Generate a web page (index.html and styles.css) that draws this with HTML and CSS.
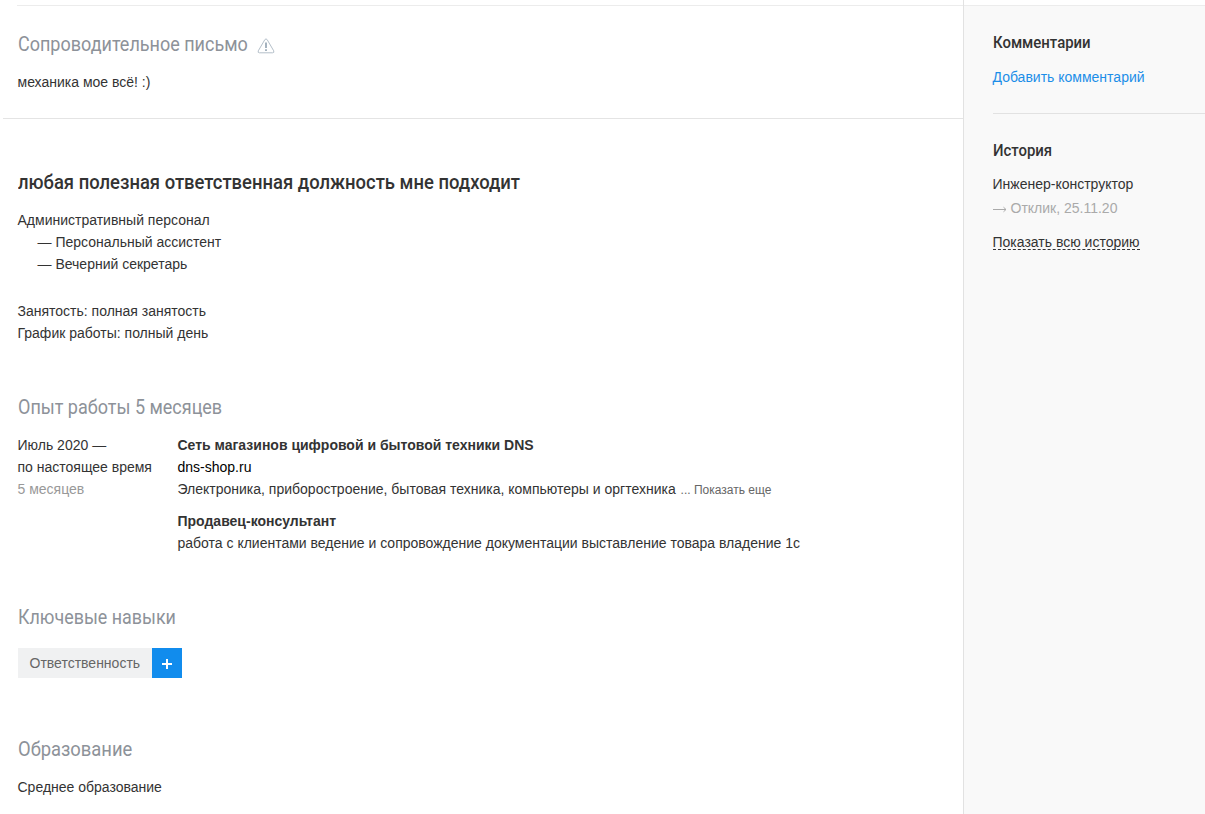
FILE: index.html
```html
<!DOCTYPE html>
<html lang="ru">
<head>
<meta charset="utf-8">
<title>Резюме</title>
<link rel="stylesheet" href="styles.css">
</head>
<body>
<div class="page">
  <main class="resume">
    <section class="letter">
      <div class="title-row">
        <h2 class="section-title title-letter">Сопроводительное письмо</h2>
        <svg class="warning" width="18" height="16" viewBox="0 0 18 16" fill="none" stroke="#b4bfc9" stroke-linejoin="round"><path d="M7.8 1.7 1.3 12.8Q.5 14.8 2.5 14.8H15.5Q17.5 14.8 16.7 12.8L10.2 1.7Q9 0 7.8 1.7Z"/><path d="M9 4.5V10M9 11.3V13" stroke="#8fa0af" stroke-width="1.6"/></svg>
      </div>
      <p class="text">механика мое всё! :)</p>
    </section>
    <section class="position">
      <h1 class="position-title">любая полезная ответственная должность мне подходит</h1>
      <p class="text">Административный персонал</p>
      <ul class="specializations">
        <li>— Персональный ассистент</li>
        <li>— Вечерний секретарь</li>
      </ul>
      <p class="text">Занятость: полная занятость</p>
      <p class="text">График работы: полный день</p>
    </section>
    <section class="experience">
      <h2 class="section-title title-experience">Опыт работы 5 месяцев</h2>
      <div class="job">
        <div class="period">
          <p class="text">Июль 2020 —</p>
          <p class="text">по настоящее время</p>
          <p class="text muted">5 месяцев</p>
        </div>
        <div class="details">
          <p class="text company">Сеть магазинов цифровой и бытовой техники DNS</p>
          <p class="text"><a class="site">dns-shop.ru</a></p>
          <p class="text"><span class="industry">Электроника, приборостроение, бытовая техника, компьютеры и оргтехника</span> <span class="more">... Показать еще</span></p>
          <p class="text role">Продавец-консультант</p>
          <p class="text duties">работа с клиентами ведение и сопровождение документации выставление товара владение 1с</p>
        </div>
      </div>
    </section>
    <section class="skills">
      <h2 class="section-title title-skills">Ключевые навыки</h2>
      <div class="tag">
        <span class="tag-name">Ответственность</span>
        <button class="tag-add" aria-label="Добавить"><svg width="10" height="10" viewBox="0 0 10 10" stroke="#fff" stroke-width="2"><path d="M5 0V10M0 5H10"/></svg></button>
      </div>
    </section>
    <section class="education">
      <h2 class="section-title title-education">Образование</h2>
      <p class="text">Среднее образование</p>
    </section>
  </main>
  <aside class="sidebar">
    <section class="comments">
      <h3 class="side-title title-comments">Комментарии</h3>
      <a class="add-comment">Добавить комментарий</a>
    </section>
    <section class="history">
      <h3 class="side-title title-history">История</h3>
      <p class="text">Инженер-конструктор</p>
      <p class="response"><svg class="arrow" width="14" height="7" viewBox="0 0 14 7" fill="none" stroke="#aaa"><path d="M0 3.5H13M10.5 1.2 13 3.5 10.5 5.8"/></svg>Отклик, 25.11.20</p>
      <a class="show-history">Показать всю историю</a>
    </section>
  </aside>
</div>
</body>
</html>
```
FILE: styles.css
```css
* { box-sizing: border-box; margin: 0; padding: 0; }
body { background: #fff; color: #333; font: 14px/22px "Liberation Sans", Arial, sans-serif; overflow: hidden; }
.page { display: flex; height: 814px; }
.resume { width: 963px; padding: 5px 0 0 3px; }
.letter { height: 114px; padding: 27px 0 0 14.5px; border-bottom: 1px solid #e4e4e4; background: linear-gradient(#ececec, #ececec) 14px 0 / 100% 1px no-repeat; }
/* Condensed headings */
.section-title, .position-title, .side-title { font-family: Roboto, "Open Sans", sans-serif; white-space: nowrap; transform-origin: 0 0; }
.section-title { height: 39px; color: #8d9299; font-size: 21px; font-weight: 400; line-height: 24px; transform: scaleX(.857); }
.title-row { display: flex; height: 39px; }
.title-letter { width: 239.5px; }
.title-skills { transform: scaleX(.852); }
.title-education { transform: scaleX(.876); }
.warning { flex: none; margin-top: 6px; }
.text { white-space: nowrap; }
.position { padding: 50px 0 0 14.5px; }
.position-title { height: 40px; font-size: 21px; font-weight: 500; line-height: 26px; transform: scaleX(.878); }
.specializations { list-style: none; padding: 0 0 25px 20px; }
.experience { padding: 51px 0 0 14.5px; }
.job { display: flex; }
.period { width: 160px; }
.muted { color: #999; }
.company, .role { font-weight: 700; }
.site { color: #000; }
.more { margin-left: 1px; color: #666; font-size: 12px; }
.role { margin-top: 9px; }
.skills { padding: 51px 0 0 14.5px; }
.title-skills { height: 43px; }
.tag { display: flex; width: 164px; height: 30px; margin-left: .5px; background: #f0f1f2; color: #666; line-height: 30px; }
.tag-name { flex: 1; padding-left: 11.5px; }
.tag-add { display: flex; align-items: center; justify-content: center; width: 30px; border: 0; padding-top: 2px; background: #118ced; }
.education { padding: 59px 0 0 14.5px; }
.sidebar { flex: 1; padding-left: 28.5px; border-left: 1px solid #e2e2e2; background: linear-gradient(#fff, #fff) 0 0 / 100% 5px no-repeat, linear-gradient(#ececec, #ececec) 0 5px / 100% 1px no-repeat, #f9f9f9; }
.comments { height: 114px; padding-top: 31px; border-bottom: 1px solid #e2e2e2; }
.side-title { height: 35px; font-size: 17px; font-weight: 500; line-height: 22px; transform: scaleX(.878); }
.add-comment { color: #1c8ee8; }
.history { padding-top: 25px; }
.title-history { height: 34px; }
.response { padding-top: 2px; color: #aaa; white-space: nowrap; }
.arrow { margin-right: 4px; }
.show-history { display: inline-block; height: 16px; margin-top: 15px; line-height: 16px; border-bottom: 1px dashed #333; white-space: nowrap; }
```
